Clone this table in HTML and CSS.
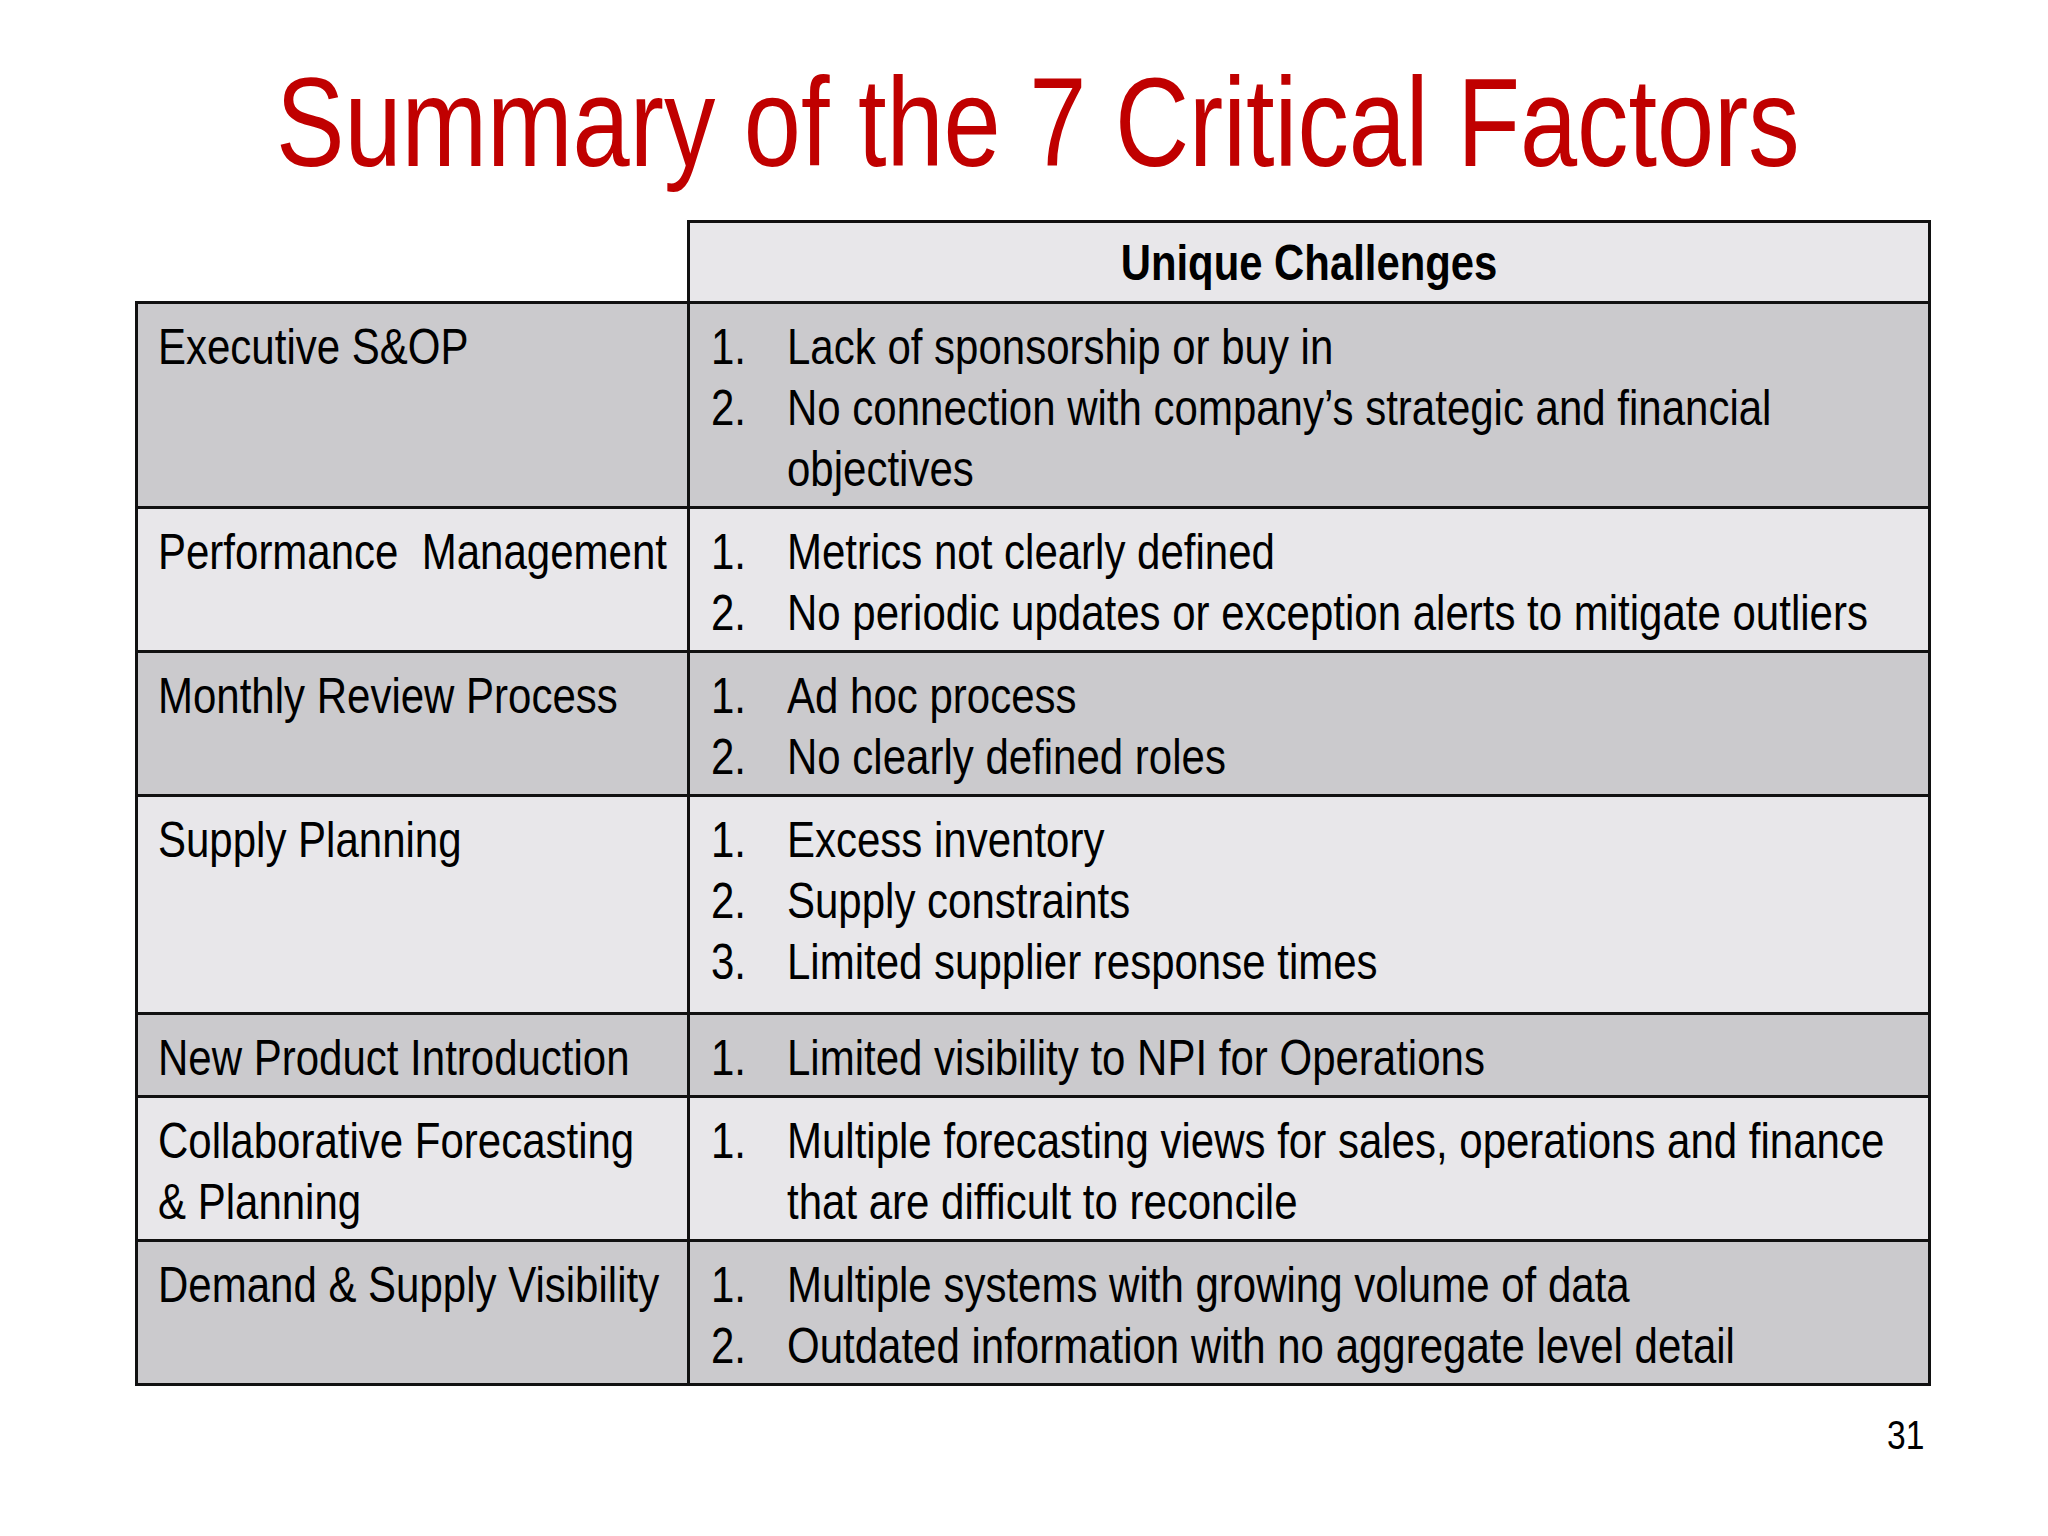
FILE: index.html
```html
<!DOCTYPE html>
<html>
<head>
<meta charset="utf-8">
<link rel="stylesheet" href="styles.css">
</head>
<body>
<div class="slide">
  <h1 class="title"><span class="nx c">Summary of the 7 Critical Factors</span></h1>
  <table class="factors">
    <colgroup><col class="c-left"><col class="c-right"></colgroup>
    <tr class="head">
      <td class="blank"></td>
      <th><span class="nx c">Unique Challenges</span></th>
    </tr>
    <tr class="dark">
      <td class="name"><span class="ln"><span class="nx">Executive S&amp;OP</span></span></td>
      <td><ol class="items">
        <li><span class="n"><span class="nx">1.</span></span><span class="t"><span class="ln"><span class="nx">Lack of sponsorship or buy in</span></span></span></li>
        <li><span class="n"><span class="nx">2.</span></span><span class="t"><span class="ln"><span class="nx">No connection with company’s strategic and financial</span></span><span class="ln"><span class="nx">objectives</span></span></span></li>
      </ol></td>
    </tr>
    <tr class="light">
      <td class="name"><span class="ln"><span class="nx">Performance&nbsp; Management</span></span></td>
      <td><ol class="items">
        <li><span class="n"><span class="nx">1.</span></span><span class="t"><span class="ln"><span class="nx">Metrics not clearly defined</span></span></span></li>
        <li><span class="n"><span class="nx">2.</span></span><span class="t"><span class="ln"><span class="nx">No periodic updates or exception alerts to mitigate outliers</span></span></span></li>
      </ol></td>
    </tr>
    <tr class="dark">
      <td class="name"><span class="ln"><span class="nx">Monthly Review Process</span></span></td>
      <td><ol class="items">
        <li><span class="n"><span class="nx">1.</span></span><span class="t"><span class="ln"><span class="nx">Ad hoc process</span></span></span></li>
        <li><span class="n"><span class="nx">2.</span></span><span class="t"><span class="ln"><span class="nx">No clearly defined roles</span></span></span></li>
      </ol></td>
    </tr>
    <tr class="light tall">
      <td class="name"><span class="ln"><span class="nx">Supply Planning</span></span></td>
      <td><ol class="items">
        <li><span class="n"><span class="nx">1.</span></span><span class="t"><span class="ln"><span class="nx">Excess inventory</span></span></span></li>
        <li><span class="n"><span class="nx">2.</span></span><span class="t"><span class="ln"><span class="nx">Supply constraints</span></span></span></li>
        <li><span class="n"><span class="nx">3.</span></span><span class="t"><span class="ln"><span class="nx">Limited supplier response times</span></span></span></li>
      </ol></td>
    </tr>
    <tr class="dark">
      <td class="name"><span class="ln"><span class="nx">New Product Introduction</span></span></td>
      <td><ol class="items">
        <li><span class="n"><span class="nx">1.</span></span><span class="t"><span class="ln"><span class="nx">Limited visibility to NPI for Operations</span></span></span></li>
      </ol></td>
    </tr>
    <tr class="light">
      <td class="name"><span class="ln"><span class="nx">Collaborative Forecasting</span></span><span class="ln"><span class="nx">&amp; Planning</span></span></td>
      <td><ol class="items">
        <li><span class="n"><span class="nx">1.</span></span><span class="t"><span class="ln"><span class="nx">Multiple forecasting views for sales, operations and finance</span></span><span class="ln"><span class="nx">that are difficult to reconcile</span></span></span></li>
      </ol></td>
    </tr>
    <tr class="dark">
      <td class="name"><span class="ln"><span class="nx">Demand &amp; Supply Visibility</span></span></td>
      <td><ol class="items">
        <li><span class="n"><span class="nx">1.</span></span><span class="t"><span class="ln"><span class="nx">Multiple systems with growing volume of data</span></span></span></li>
        <li><span class="n"><span class="nx">2.</span></span><span class="t"><span class="ln"><span class="nx">Outdated information with no aggregate level detail</span></span></span></li>
      </ol></td>
    </tr>
  </table>
  <div class="pagenum"><span class="nx r">31</span></div>
</div>
</body>
</html>
```

FILE: styles.css
```css
html, body {
  margin: 0;
  padding: 0;
  background: #ffffff;
}
body {
  width: 2048px;
  height: 1536px;
  overflow: hidden;
  font-family: "Liberation Sans", Arial, sans-serif;
  color: #000;
}
.slide {
  display: flex;
  flex-direction: column;
  width: 2048px;
  height: 1536px;
}
/* narrow face emulation (Arial Narrow look) */
.nx {
  display: inline-block;
  white-space: nowrap;
  transform: scaleX(0.84);
  transform-origin: left center;
}
.nx.c { transform-origin: center center; }
.nx.r { transform-origin: right center; }
.ln {
  display: block;
  white-space: nowrap;
}
.title {
  margin: 0;
  padding: 48px 0 0 28px;
  font-weight: normal;
  font-size: 126px;
  line-height: 150px;
  height: 150px;
  color: #c00000;
  text-align: center;
  white-space: nowrap;
}
.title .nx { transform: scaleX(0.815); }
.factors {
  margin: 22px 0 0 135px;
  width: 1793px;
  border-collapse: collapse;
  table-layout: fixed;
  font-size: 50px;
  line-height: 61px;
}
.c-left { width: 552px; }
.c-right { width: 1241px; }
.factors td, .factors th {
  border: 3px solid #111;
  vertical-align: top;
  padding: 13px 18px 6px 21px;
  text-align: left;
}
.factors td.name { padding-left: 20px; }
.factors td.blank {
  border: none;
  border-bottom: 3px solid #111;
  background: #fff;
}
.head th {
  background: #e8e7ea;
  font-weight: bold;
  text-align: center;
  padding: 10px 18px 7px 18px;
  white-space: nowrap;
}
.head th .nx { transform: scaleX(0.837); }
.dark td { background: #cbcacd; }
.light td { background: #e8e7ea; }
.tall td { padding-bottom: 19px; }
.items {
  list-style: none;
  margin: 0;
  padding: 0;
}
.items li {
  display: grid;
  grid-template-columns: 76px 1fr;
}
.pagenum {
  width: 1924px;
  text-align: right;
  font-size: 40px;
  line-height: 48px;
  margin-top: 25px;
}
```
